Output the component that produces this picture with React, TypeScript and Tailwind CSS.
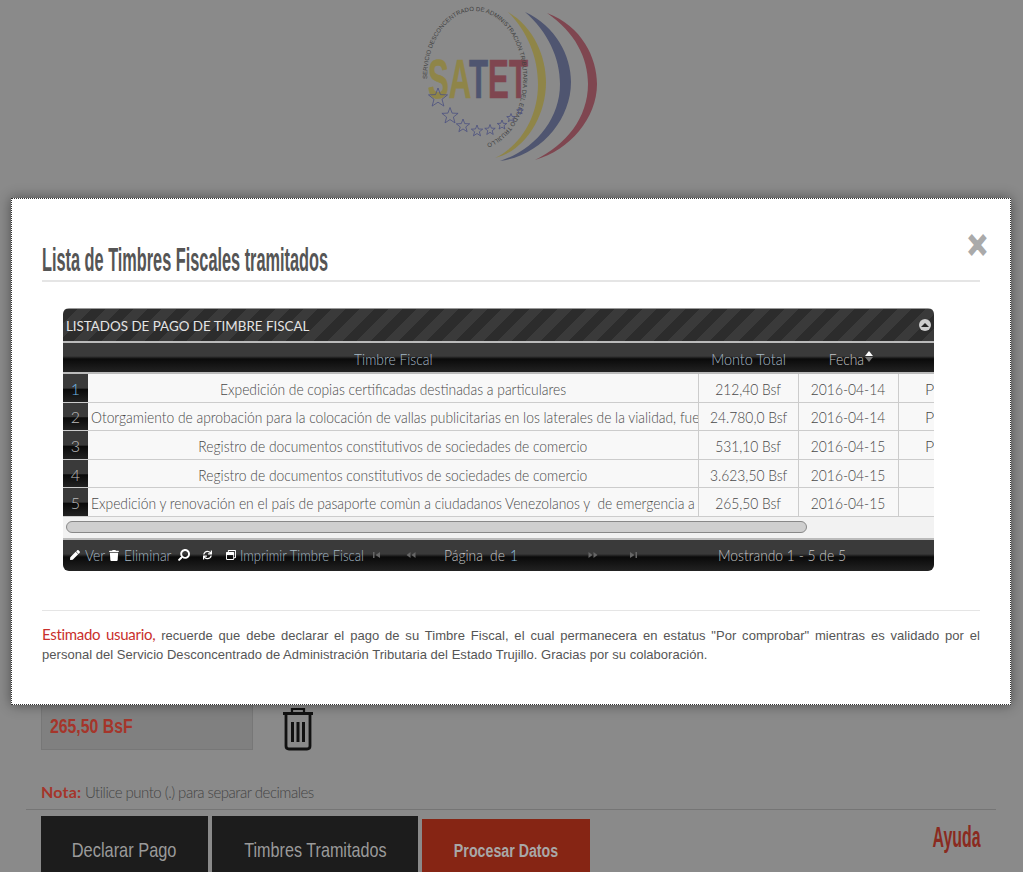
import { FaPen, FaTrash, FaSearch, FaSync, FaRegWindowRestore } from "react-icons/fa";

const arial = "font-['Liberation_Sans',sans-serif]";
const lato = "font-['Lato',sans-serif]";
const sqC = "inline-block whitespace-pre scale-x-[0.865]";
const sqL = "inline-block whitespace-pre scale-x-[0.865] origin-left";

const rows = [
  { n: "1", text: "Expedición de copias certificadas destinadas a particulares", monto: "212,40 Bsf", fecha: "2016-04-14", extra: "P", center: true, active: true },
  { n: "2", text: "Otorgamiento de aprobación para la colocación de vallas publicitarias en los laterales de la vialidad, fuera de las zonas urbanas y rurales del estado", monto: "24.780,0 Bsf", fecha: "2016-04-14", extra: "P", center: false },
  { n: "3", text: "Registro de documentos constitutivos de sociedades de comercio", monto: "531,10 Bsf", fecha: "2016-04-15", extra: "P", center: true },
  { n: "4", text: "Registro de documentos constitutivos de sociedades de comercio", monto: "3.623,50 Bsf", fecha: "2016-04-15", extra: "", center: true },
  { n: "5", text: "Expedición y renovación en el país de pasaporte comùn a ciudadanos Venezolanos y  de emergencia a otros países del mundo entero", monto: "265,50 Bsf", fecha: "2016-04-15", extra: "", center: false },
];

const stars = [
  [28, 98, 10], [40, 116, 8.5], [53, 126, 7], [67, 131, 6], [80, 130, 5.5], [92, 125, 5], [101, 118, 4.5], [110, 111, 3.5],
];

function Logo() {
  return (
    <svg width="190" height="170" viewBox="0 0 190 170" className="block">
      <defs>
        <path id="ring" d="M 17 79 A 48 67 0 0 1 113 77 A 48 67 0 0 1 54 144" fill="none" />
      </defs>
      <path d="M 137 13 C 172 26 187 58 187 84 C 187 118 160 150 125 160 C 156 145 178 118 178 84 C 178 58 165 32 137 13 Z" fill="#7f4650" />
      <path d="M 115 12 C 146 26 161 56 161 82 C 161 120 130 156 90 161 C 124 150 150 120 150 84 C 150 58 138 32 115 12 Z" fill="#4f5570" />
      <path d="M 98 12 C 125 28 136 58 136 82 C 136 120 112 152 85 158 C 110 146 128 118 128 84 C 128 58 118 32 98 12 Z" fill="#8f8548" />
      <text x="18" y="98" fontFamily="Liberation Sans" fontWeight="700" fontSize="56" strokeWidth="0.7" textLength="100" lengthAdjust="spacingAndGlyphs">
        <tspan fill="#8f8548" stroke="#8f8548">SA</tspan>
        <tspan fill="#4f5570" stroke="#4f5570">T</tspan>
        <tspan fill="#7f4650" stroke="#7f4650">ET</tspan>
      </text>
      <text fontFamily="Liberation Sans" fontSize="6" fill="#404040" letterSpacing="0.05">
        <textPath href="#ring">SERVICIO DESCONCENTRADO DE ADMINISTRACIÓN TRIBUTARIA DEL ESTADO TRUJILLO</textPath>
      </text>
      {stars.map(([x, y, r]) => {
        const pts = Array.from({ length: 10 }, (_, i) => {
          const a = -Math.PI / 2 + (i * Math.PI) / 5;
          const d = i % 2 === 0 ? r : r * 0.42;
          return `${x + d * Math.cos(a)},${y + d * Math.sin(a)}`;
        }).join(" ");
        return <polygon key={x} points={pts} fill="none" stroke="#4b5180" strokeWidth="0.8" />;
      })}
    </svg>
  );
}

function BigTrash() {
  return (
    <svg width="32" height="44" viewBox="0 0 32 44" fill="none" stroke="#111" className="block">
      <path d="M10 5 V2 H22 V5" strokeWidth="2.2" />
      <path d="M1 6.5 H31" strokeWidth="3" />
      <path d="M4 8 V39 Q4 42 7 42 H25 Q28 42 28 39 V8" strokeWidth="2.8" />
      <path d="M10.5 15 V35 M16 15 V35 M21.5 15 V35" strokeWidth="3" />
    </svg>
  );
}

function Seek({ dir, bar }: { dir: "l" | "r"; bar: boolean }) {
  const flip = dir === "r" ? "scale-x-[-1]" : "";
  return (
    <svg width="10" height="8" viewBox="0 0 10 8" className={`shrink-0 ${flip}`} fill="#666">
      {bar ? (
        <>
          <rect x="1" y="1" width="1.5" height="6" />
          <path d="M8 1 V7 L3.5 4 Z" />
        </>
      ) : (
        <>
          <path d="M4.5 1 V7 L0.5 4 Z" />
          <path d="M9.5 1 V7 L5.5 4 Z" />
        </>
      )}
    </svg>
  );
}

function JqGrid() {
  return (
    <div className={`w-[871px] ${lato} overflow-hidden rounded-md`}>
      {/* caption */}
      <div className="h-[33px] flex items-center justify-between px-[3px] border-t border-[#999] bg-[repeating-linear-gradient(135deg,#2c2c2c_0px,#2c2c2c_10px,#3a3a3a_10px,#3a3a3a_20px)]">
        <span className="inline-block whitespace-pre origin-left scale-x-[0.955] text-[14px] text-[#e4e4e4]">LISTADOS DE PAGO DE TIMBRE FISCAL</span>
        <span className="w-3 h-3 rounded-full bg-[#ccc] flex items-center justify-center">
          <span className="w-0 h-0 border-x-[4px] border-x-transparent border-b-[4px] border-b-[#222]" />
        </span>
      </div>
      {/* header */}
      <div className="h-[33px] grid grid-cols-[25px_610px_100px_100px_36px] border-y-2 border-[#bbb] bg-[linear-gradient(#3a3a3a_0%,#3a3a3a_45%,#0a0a0a_55%,#222_100%)] text-[16px] font-light text-[#a5b8c5]">
        <div />
        <div className="flex items-center justify-center pt-[2px]"><span className={sqC}>Timbre Fiscal</span></div>
        <div className="flex items-center justify-center pt-[2px]"><span className="inline-block whitespace-pre scale-x-[0.9]">Monto Total</span></div>
        <div className="flex items-center justify-center pt-[2px] text-[#c4c4c4]">
          <span className={`${sqC} ml-[3px]`}>Fecha</span>
          <span className="flex flex-col gap-[1px] -ml-[1px] -mt-[4px]">
            <span className="w-0 h-0 border-x-[4px] border-x-transparent border-b-[5px] border-b-white" />
            <span className="w-0 h-0 border-x-[4px] border-x-transparent border-t-[5px] border-t-[#777]" />
          </span>
        </div>
        <div />
      </div>
      {/* rows */}
      {rows.map((r) => (
        <div key={r.n} className="h-[28.6px] grid grid-cols-[25px_610px_100px_100px_36px] bg-[#f8f8f8] border-b border-[#ccc] text-[16px] font-light text-[#484848]">
          <div className={`flex items-center justify-center pt-[2px] bg-[linear-gradient(#3a3a3a_0%,#3a3a3a_50%,#0a0a0a_55%,#222_100%)] ${r.active ? "text-[#6fb5e0]" : "text-[#bbb]"}`}>{r.n}</div>
          <div className={`px-[3px] pt-[2px] flex items-center overflow-hidden ${r.center ? "justify-center" : ""}`}>
            <span className={r.center ? sqC : sqL}>{r.text}</span>
          </div>
          <div className="pt-[2px] flex items-center justify-center border-l border-[#ccc]"><span className={sqC}>{r.monto}</span></div>
          <div className="pt-[2px] flex items-center justify-center border-l border-[#ccc]"><span className={sqC}>{r.fecha}</span></div>
          <div className="pt-[2px] flex items-center pl-[26px] border-l border-[#ccc] overflow-hidden">{r.extra}</div>
        </div>
      ))}
      {/* scrollbar */}
      <div className="h-[21px] bg-[#f2f2f2] pl-[3px] pt-[4px]">
        <div className="w-[741px] h-[12px] rounded-full bg-[#cfcfcf] border border-[#888]" />
      </div>
      {/* pager */}
      <div className="h-[33px] pl-[7px] flex items-center border-t-2 border-[#bbb] bg-[linear-gradient(#3a3a3a_0%,#3a3a3a_45%,#0a0a0a_55%,#222_100%)] text-[16px] font-light text-[#a5b8c5]">
        <FaPen className="shrink-0 w-[10px] h-[10px] text-white" />
        <span className="w-[24px] ml-[5px] shrink-0"><span className={sqL}>Ver</span></span>
        <FaTrash className="shrink-0 w-[10px] h-[11px] text-white" />
        <span className="w-[54px] ml-[5px] shrink-0"><span className={sqL}>Eliminar</span></span>
        <FaSearch className="shrink-0 w-[12px] h-[12px] text-white -scale-x-100" />
        <FaSync className="shrink-0 ml-[13px] w-[9px] h-[10px] text-white" />
        <FaRegWindowRestore className="shrink-0 ml-[14px] w-[10px] h-[10px] text-white" />
        <span className="w-[132px] ml-[4px] shrink-0"><span className="inline-block whitespace-pre origin-left scale-x-[0.82]">Imprimir Timbre Fiscal</span></span>
        <Seek dir="l" bar />
        <span className="ml-[24px] flex shrink-0"><Seek dir="l" bar={false} /></span>
        <span className="w-[46px] ml-[28px] shrink-0 text-[#c4c4c4]"><span className={sqL}>Página</span></span>
        <span className="w-[20px] shrink-0 text-[#c4c4c4]"><span className={sqL}>de</span></span>
        <span className="w-[6px] shrink-0 text-[#8fc0e0]"><span className={sqL}>1</span></span>
        <span className="ml-[72px] flex shrink-0"><Seek dir="r" bar={false} /></span>
        <span className="ml-[30px] flex shrink-0"><Seek dir="r" bar /></span>
        <span className="ml-[80px] text-[#c4c4c4]"><span className={sqL}>Mostrando 1 - 5 de 5</span></span>
      </div>
    </div>
  );
}

export default function App() {
  return (
    <div className="relative h-[872px] overflow-hidden bg-[#8a8a8a]">
      {/* page behind the modal */}
      <div className="pl-[41px] pr-[27px]">
        <div className="h-[700px] pl-[369px]">
          <Logo />
        </div>
        <div className="flex items-start">
          <div className={`w-[212px] h-[50px] bg-[#808080] border border-[#777] flex items-center pl-2 pt-[2px] ${arial} text-[20px] font-bold text-[#a5352a]`}>
            <span className="inline-block whitespace-pre origin-left scale-x-[0.79]">265,50 BsF</span>
          </div>
          <div className="ml-[29px] mt-[7px]"><BigTrash /></div>
        </div>
        <div className={`mt-[29px] h-[29px] text-[15px] font-light tracking-[-0.5px] text-[#444] ${lato}`}>
          <span className="text-[16px] tracking-[0.2px] font-bold text-[#a5352a]">Nota:</span> Utilice punto (.) para separar decimales
        </div>
        <div className="-ml-[15px] border-t border-[#757575]" />
        <div className={`flex items-start gap-1 mt-[6px] ${arial}`}>
          <div className="w-[167px] h-[56px] pt-[12px] bg-[#1c1c1c] flex items-center justify-center text-[21px] text-[#9a9a9a]">
            <span className="inline-block whitespace-pre scale-x-[0.78]">Declarar Pago</span>
          </div>
          <div className="w-[206px] h-[56px] pt-[12px] bg-[#1c1c1c] flex items-center justify-center text-[21px] text-[#9a9a9a]">
            <span className="inline-block whitespace-pre scale-x-[0.77]">Timbres Tramitados</span>
          </div>
          <div className="w-[168px] h-[56px] pt-[8px] mt-[3px] bg-[#862514] flex items-center justify-center text-[18px] font-bold text-[#a8a8a8]">
            <span className="inline-block whitespace-pre scale-x-[0.79]">Procesar Datos</span>
          </div>
          <div className="ml-auto mr-[15px] -mt-[2px] text-[30px] font-bold text-[#8a2a20]">
            <span className="inline-block whitespace-pre origin-right scale-x-[0.53]">Ayuda</span>
          </div>
        </div>
      </div>

      {/* modal */}
      <div className="absolute left-[11px] top-[198px] w-[1000px] h-[507px] bg-white border border-dotted border-[#333] shadow-[0_0_12px_rgba(0,0,0,0.45)] px-[30px]">
        <div className="flex justify-between items-start h-[83px] border-b-2 border-[#e5e5e5]">
          <h3 className={`mt-[43px] text-[33px] leading-[36px] font-bold text-[#555] ${arial}`}>
            <span className="inline-block whitespace-pre origin-left scale-x-[0.494]">Lista de Timbres Fiscales tramitados</span>
          </h3>
          <span className={`mt-[28px] -mr-[7px] text-[33px] leading-[36px] font-bold text-[#aaa] scale-y-[1.2] [-webkit-text-stroke:1.5px_#aaa] ${arial}`}>×</span>
        </div>
        <div className="pt-[26px] pl-[21px] h-[329px] border-b border-[#e5e5e5]">
          <JqGrid />
        </div>
        <p className={`mt-[14px] text-justify text-[13px] leading-[19px] tracking-[0.03px] text-[#555] ${arial}`}>
          <span className={`text-[15px] tracking-[-0.3px] text-[#c9302c] ${lato}`}>Estimado usuario,</span> recuerde que debe declarar el pago de su Timbre Fiscal, el cual permanecera en estatus "Por comprobar" mientras es validado por el personal del Servicio Desconcentrado de Administración Tributaria del Estado Trujillo. Gracias por su colaboración.
        </p>
      </div>
    </div>
  );
}
